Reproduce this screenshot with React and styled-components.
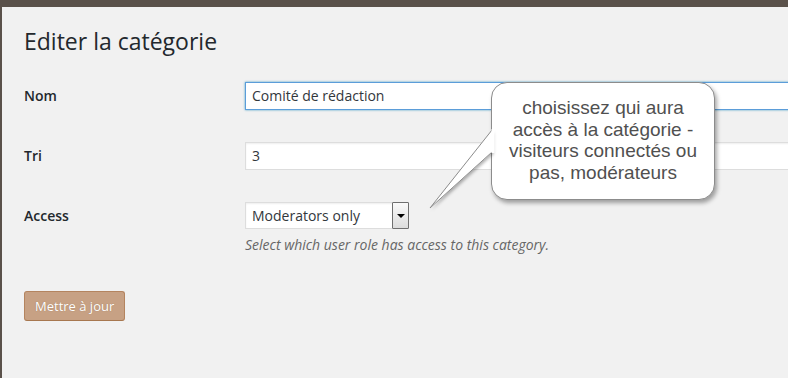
import React from "react";
import styled, { createGlobalStyle } from "styled-components";

const GlobalStyle = createGlobalStyle`
  html, body { margin: 0; padding: 0; background: #f1f1f1; overflow: hidden; }
  body { font-family: "Open Sans", "Liberation Sans", sans-serif; }
  * { box-sizing: border-box; }
`;

const Page = styled.div`
  position: relative;
  width: 788px;
  height: 378px;
  background: #f1f1f1;
  border-top: 7px solid #5a514a;
  border-left: 2px solid #5a514a;
  padding-left: 22px;
  overflow: hidden;
`;

const Title = styled.h1`
  margin: 19px 0 0;
  font-size: 23px;
  line-height: 30px;
  font-weight: 400;
  color: #23282d;
`;

const FormTable = styled.div`
  margin-top: 10px;
`;

const Row = styled.div`
  display: grid;
  grid-template-columns: 221px 1fr;
  align-items: start;
  padding: 16px 0;
`;

const Label = styled.label`
  font-size: 14px;
  font-weight: 600;
  line-height: 28px;
  color: #23282d;
`;

const Field = styled.div`
  display: flex;
  flex-direction: column;
  align-items: flex-start;
`;

const TextInput = styled.div`
  width: 580px;
  height: 28px;
  padding: 0 6px;
  background: #fff;
  border: 1px solid ${(p) => (p.$focus ? "#5b9dd9" : "#ddd")};
  box-shadow: ${(p) =>
    p.$focus
      ? "0 0 2px rgba(30,140,190,0.8)"
      : "inset 0 1px 2px rgba(0,0,0,0.07)"};
  font-size: 14px;
  line-height: 26px;
  color: #32373c;
`;

const Select = styled.div`
  display: flex;
  align-items: stretch;
  width: 164px;
  height: 27px;
  background: #fff;
  border: 1px solid #ddd;
  box-shadow: inset 0 1px 2px rgba(0,0,0,0.07);
`;

const SelectText = styled.span`
  flex: 1;
  padding-left: 6px;
  font-size: 14px;
  line-height: 25px;
  color: #32373c;
`;

const SelectArrow = styled.span`
  width: 17px;
  margin: -1px -1px -1px 0;
  border: 1px solid #6f6f6f;
  border-radius: 1px;
  background: linear-gradient(#fafafa, #dcdcdc);
  display: flex;
  align-items: center;
  justify-content: center;
  &::after {
    content: "";
    border-left: 4px solid transparent;
    border-right: 4px solid transparent;
    border-top: 4px solid #000;
  }
`;

const Description = styled.p`
  margin: 6px 0 0;
  font-size: 14px;
  line-height: 20px;
  font-style: italic;
  color: #666;
`;

const Button = styled.button`
  margin-top: 20px;
  height: 30px;
  padding: 0 10px;
  background: #c7a184;
  border: 1px solid #b4845f;
  border-bottom-color: #a7774f;
  border-radius: 3px;
  color: #fff;
  font-family: "Open Sans", "Liberation Sans", sans-serif;
  font-size: 13px;
  line-height: 28px;
  text-shadow: 0 0 1px rgba(120,80,50,0.5);
  cursor: pointer;
`;

const Callout = styled.div`
  position: absolute;
  left: 489px;
  top: 75px;
  width: 224px;
  height: 118px;
  padding-top: 14px;
  background: #fff;
  border: 1px solid #8c8c8c;
  border-radius: 16px;
  box-shadow: 2px 3px 4px rgba(0,0,0,0.35);
  font-family: "Liberation Sans", Arial, sans-serif;
  font-size: 19px;
  line-height: 21.5px;
  text-align: center;
  color: #505050;
  z-index: 2;
`;

const Tail = styled.svg`
  position: absolute;
  left: 418px;
  top: 108px;
  z-index: 3;
  overflow: visible;
`;

export default function App() {
  return (
    <>
      <GlobalStyle />
      <Page>
        <Title>Editer la catégorie</Title>
        <FormTable>
          <Row>
            <Label>Nom</Label>
            <Field>
              <TextInput $focus>Comité de rédaction</TextInput>
            </Field>
          </Row>
          <Row>
            <Label>Tri</Label>
            <Field>
              <TextInput>3</TextInput>
            </Field>
          </Row>
          <Row>
            <Label>Access</Label>
            <Field>
              <Select>
                <SelectText>Moderators only</SelectText>
                <SelectArrow />
              </Select>
              <Description>Select which user role has access to this category.</Description>
            </Field>
          </Row>
        </FormTable>
        <Button>Mettre à jour</Button>
        <Callout>
          choisissez qui aura
          <br />
          accès à la catégorie -
          <br />
          visiteurs connectés ou
          <br />
          pas, modérateurs
        </Callout>
        <Tail width="80" height="100" viewBox="0 0 80 100">
          <defs>
            <filter id="ts" x="-20%" y="-20%" width="150%" height="150%">
              <feDropShadow dx="1.5" dy="2" stdDeviation="1.5" floodColor="#000" floodOpacity="0.3" />
            </filter>
          </defs>
          <polygon points="72,15 10,93 72,37" fill="#fff" filter="url(#ts)" />
          <polyline points="72,15 10,93 72,37" fill="none" stroke="#8c8c8c" strokeWidth="1" />
          <rect x="71.5" y="14" width="3" height="24" fill="#fff" />
        </Tail>
      </Page>
    </>
  );
}
